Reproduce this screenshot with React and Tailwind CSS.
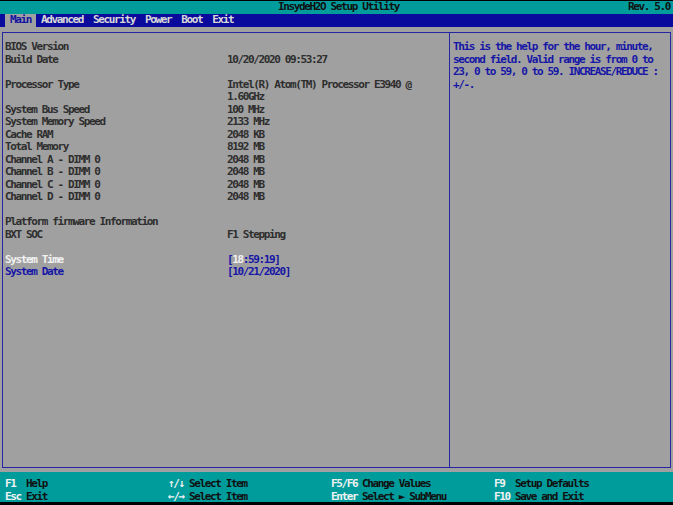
import React from "react";

const font = "font-['DejaVu_Sans_Mono',monospace] text-[11px] tracking-[-1.37px] leading-[12.5px] font-bold";

const rows = [
  ["BIOS Version", ""],
  ["Build Date", "10/20/2020 09:53:27"],
  null,
  ["Processor Type", "Intel(R) Atom(TM) Processor E3940 @"],
  ["", "1.60GHz"],
  ["System Bus Speed", "100 MHz"],
  ["System Memory Speed", "2133 MHz"],
  ["Cache RAM", "2048 KB"],
  ["Total Memory", "8192 MB"],
  ["Channel A - DIMM 0", "2048 MB"],
  ["Channel B - DIMM 0", "2048 MB"],
  ["Channel C - DIMM 0", "2048 MB"],
  ["Channel D - DIMM 0", "2048 MB"],
  null,
  ["Platform firmware Information", ""],
  ["BXT SOC", "F1 Stepping"],
  null,
];

const tabs = ["Main", "Advanced", "Security", "Power", "Boot", "Exit"];

const help = [
  "This is the help for the hour, minute,",
  "second field. Valid range is from 0 to",
  "23, 0 to 59, 0 to 59. INCREASE/REDUCE :",
  "+/-.",
];

const footer = [
  [["F1", "Help"], ["Esc", "Exit"]],
  [["\u2191/\u2193", "Select Item"], ["\u2190/\u2192", "Select Item"]],
  [["F5/F6", "Change Values"], ["Enter", "Select \u25BA SubMenu"]],
  [["F9", "Setup Defaults"], ["F10", "Save and Exit"]],
];

function Row({ label, value, labelCls = "text-[#2e2e2e]", children }) {
  return (
    <div className="grid grid-cols-[222px_1fr] h-[12.5px] whitespace-pre">
      <div className={labelCls}>{label}</div>
      <div className="text-[#2e2e2e]">{children || value}</div>
    </div>
  );
}

export default function App() {
  return (
    <div className={`w-[673px] h-[505px] bg-black pt-[1px] flex flex-col ${font}`}>
      {/* title bar */}
      <div className="h-[13px] bg-[#009c9c] relative flex items-center justify-center text-[#101010]">
        <span className="ml-[4px]">InsydeH2O Setup Utility</span>
        <span className="absolute right-[3px] top-0">Rev. 5.0</span>
      </div>

      {/* menu tabs */}
      <div className="h-[13px] bg-[#0a0a9c] flex pl-[5px]">
        {tabs.map((t, i) => (
          <div
            key={t}
            className={`px-[5px] h-[13px] ${i === 0 ? "bg-[#a0a0a0] text-[#1414a0]" : "text-[#d8d8d8]"}`}
          >
            {t}
          </div>
        ))}
      </div>

      {/* body */}
      <div className="flex-1 bg-[#a0a0a0] pl-[2px] pr-[2px] pt-[5px] pb-[4px]">
        <div className="h-full border border-[#2626a2] flex">
          <div className="w-[447px] border-r border-[#2626a2] pt-[8px] pl-[2px]">
            {rows.map((r, i) =>
              r ? <Row key={i} label={r[0]} value={r[1]} /> : <div key={i} className="h-[12.5px]" />
            )}
            <Row label="System Time" labelCls="text-[#f2f2f2]">
              <span className="text-[#1616a6]">
                [<span className="text-[#f2f2f2]">18</span>:59:19]
              </span>
            </Row>
            <Row label="System Date" labelCls="text-[#1616a6]">
              <span className="text-[#1616a6]">[10/21/2020]</span>
            </Row>
          </div>
          <div className="flex-1 pt-[8px] pl-[3px] text-[#1616a6] whitespace-pre">
            {help.map((l) => (
              <div key={l} className="h-[12.5px]">{l}</div>
            ))}
          </div>
        </div>
      </div>

      {/* key help */}
      <div className="h-[30px] bg-[#009c9c] pt-[6px] pl-[5px] flex">
        {footer.map((col, ci) => (
          <div key={ci} className="w-[163px] flex flex-col">
            {col.map(([k, d]) => (
              <div key={k} className="h-[12.5px] flex whitespace-pre">
                <span className={`text-[#f2f2f2] ${ci === 2 ? "w-[31px]" : "w-[21px]"}`}>{k}</span>
                <span className="text-[#101010]">{d}</span>
              </div>
            ))}
          </div>
        ))}
      </div>
      <div className="h-[3px] bg-black" />
    </div>
  );
}
